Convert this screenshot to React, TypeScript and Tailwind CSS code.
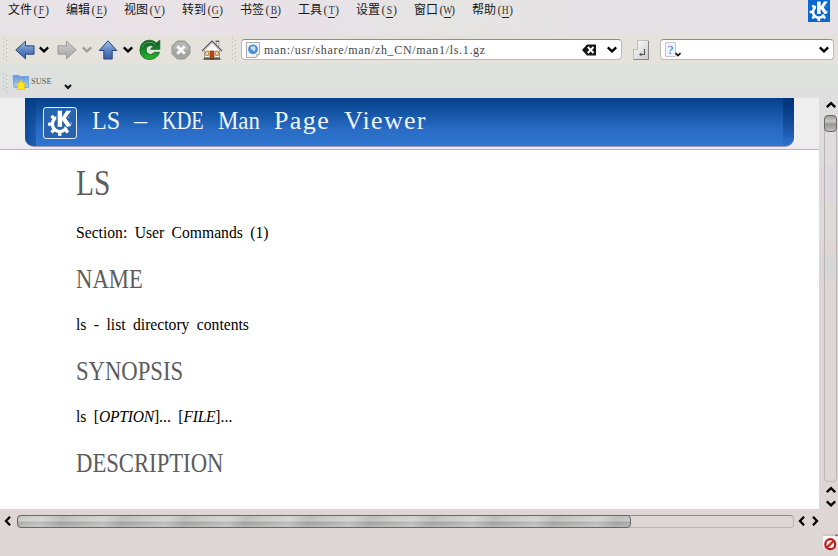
import React from "react";

const SERIF = "font-['Liberation_Serif','Noto_Sans_CJK_SC',serif]";

const menus: [string, string][] = [
  ["文件", "F"],
  ["编辑", "E"],
  ["视图", "V"],
  ["转到", "G"],
  ["书签", "B"],
  ["工具", "T"],
  ["设置", "S"],
  ["窗口", "W"],
  ["帮助", "H"],
];

function Chevron({ dir = "down", className = "" }: { dir?: "down" | "up" | "left" | "right"; className?: string }) {
  const d = {
    down: "M0.8 2.4 L5 6.4 L9.2 2.4",
    up: "M0.8 7.2 L5 3.2 L9.2 7.2",
    left: "M7 0.8 L3 5 L7 9.2",
    right: "M3 0.8 L7 5 L3 9.2",
  }[dir];
  return (
    <svg viewBox="0 0 10 10" className={`block h-[10px] w-[10px] shrink-0 overflow-visible ${className}`}>
      <path d={d} fill="none" stroke="currentColor" strokeWidth="2.3" />
    </svg>
  );
}

function Grip({ className = "" }: { className?: string }) {
  return (
    <svg width="6" height="26" className={`block shrink-0 ${className}`}>
      {[0, 1, 2, 3, 4, 5].map((i) => (
        <rect key={"a" + i} x="0" y={1 + i * 4} width="1" height="1" fill="#b5b2ae" />
      ))}
      {[0, 1, 2, 3, 4, 5].map((i) => (
        <rect key={"b" + i} x="3" y={3 + i * 4} width="1" height="1" fill="#b5b2ae" />
      ))}
    </svg>
  );
}

function Arrow({ kind }: { kind: "back" | "forward" | "up" }) {
  const rot = { back: "rotate(0 10 10)", forward: "rotate(180 10 10)", up: "rotate(90 10 10)" }[kind];
  const grey = kind === "forward";
  const id = "arrow-" + kind;
  const flip = { back: ["0", "0", "0", "1"], forward: ["0", "1", "0", "0"], up: ["0", "0", "1", "0"] }[kind];
  return (
    <svg viewBox="0 0 20 20" className="block h-5 w-5 shrink-0">
      <defs>
        <linearGradient id={id} x1={flip[0]} y1={flip[1]} x2={flip[2]} y2={flip[3]}>
          <stop offset="0" stopColor={grey ? "#d2d2d0" : "#a5c4ea"} />
          <stop offset="0.5" stopColor={grey ? "#b9b9b7" : "#6087c2"} />
          <stop offset="1" stopColor={grey ? "#a9a9a7" : "#365f9f"} />
        </linearGradient>
      </defs>
      <path
        transform={rot}
        d="M0.8 10 L10.5 1.2 V5.8 H19 V14.2 H10.5 V18.8 Z"
        fill={`url(#${id})`}
        stroke={grey ? "#989896" : "#24477f"}
        strokeWidth="1"
        strokeLinejoin="round"
      />
    </svg>
  );
}

function Reload() {
  return (
    <svg viewBox="0 0 22 22" className="block h-[22px] w-[22px] shrink-0">
      <defs>
        <linearGradient id="rl" x1="0" y1="0" x2="0" y2="1">
          <stop offset="0" stopColor="#0e5a20" />
          <stop offset="0.5" stopColor="#16892d" />
          <stop offset="1" stopColor="#2fb72b" />
        </linearGradient>
      </defs>
      <path
        d="M17.4 4 L20.8 1.2 V10.3 H11.5 L14.2 7.4 C12 5.8 7.4 6.4 7.2 11 C7.2 15.6 12.6 17 15.3 13.3 H20.4 C18 23.2 1 23.2 1 11 C1 1 12 -1.3 17.4 4 Z"
        fill="url(#rl)"
        stroke="#0b661c"
        strokeWidth="0.8"
      />
      <path d="M3.2 8 C5.5 2.5 12.5 1.8 16.6 5.6" fill="none" stroke="#5cab67" strokeWidth="0.9" />
    </svg>
  );
}

function Stop() {
  return (
    <svg viewBox="0 0 20 20" className="block h-5 w-5 shrink-0">
      <path d="M6.3 1 H13.7 L19 6.3 V13.7 L13.7 19 H6.3 L1 13.7 V6.3 Z" fill="#a4a4a3" stroke="#979796" />
      <path d="M6.7 2 H13.3 L18 6.7 V10 H2 V6.7 Z" fill="#b4b4b3" />
      <path d="M6.3 6.3 L13.7 13.7 M13.7 6.3 L6.3 13.7" stroke="#f8f8f8" strokeWidth="3" />
    </svg>
  );
}

function Home() {
  return (
    <svg viewBox="0 0 22 22" className="block h-[22px] w-[22px] shrink-0">
      <rect x="15.2" y="2.5" width="2.6" height="6" fill="#f2f2f0" stroke="#777" strokeWidth="0.6" />
      <path d="M14.6 2.2 H18.4" stroke="#444" strokeWidth="1" />
      <path d="M3.5 11 L11 3.5 L18.5 11 V19.5 H3.5 Z" fill="#fafaf8" stroke="#777" strokeWidth="0.7" />
      <path d="M1.2 12 L11 2.2 L20.8 12" fill="none" stroke="#4b4b4b" strokeWidth="1.5" />
      <path d="M2.4 11.8 L11 3.2 L19.6 11.8" fill="none" stroke="#e4e4e2" strokeWidth="0.9" />
      <rect x="9" y="12" width="4" height="8" fill="#bd4a12" stroke="#7b2e0a" strokeWidth="0.7" />
      <path d="M4.8 12.2h2.8v4.3H4.8zM14.6 12.2h2.8v4.3h-2.8z" fill="#f7ddae" stroke="#b97c2c" strokeWidth="0.9" />
      <path d="M2.5 20 H19.5" stroke="#3d3d3d" strokeWidth="1.4" />
      <path d="M3.5 18.7h5M14 18.7h4.5" stroke="#66753c" strokeWidth="1" />
    </svg>
  );
}

/* Gear with the K laid over its upper right side, on a 24 unit grid. */
function KdeGear({ cut, className = "" }: { cut: string; className?: string }) {
  return (
    <svg viewBox="0 0 24 24" className={`block shrink-0 ${className}`}>
      <circle cx="11.8" cy="13" r="6.3" fill="none" stroke="#fff" strokeWidth="2.8" />
      {[0, 45, 90, 135, 180, 225, 270, 315].map((a) => (
        <rect key={a} x="10.4" y="3" width="2.8" height="3.4" fill="#fff" transform={`rotate(${a} 11.8 13)`} />
      ))}
      <path d="M8.8 0 H23.5 L18.8 7.6 L22.6 14.6 L18.2 16.8 L14.8 13 V16.2 H8.8 Z" fill={cut} />
      <path d="M10 1.6 H13.8 V7 L17.4 1.6 H21.6 L17 7.8 L21.6 14.2 L18.2 15.6 L13.8 9.6 V15.2 H10 Z" fill="#fff" />
    </svg>
  );
}

function Globe() {
  return (
    <svg viewBox="0 0 14 16" className="ml-[4px] block h-4 w-[14px] shrink-0">
      <path d="M0.5 0.5 H13.5 V12 L10 15.5 H0.5 Z" fill="#f5f5f5" stroke="#aaa" />
      <circle cx="7" cy="7.3" r="4.9" fill="#4d8edb" />
      <path d="M4.5 5.5 Q6 3.5 8.5 4.5 Q10.5 6.5 8.8 8.8 Q7 10 6.4 7.8 Q4.6 7.8 4.5 5.5" fill="#c6e3ff" />
      <path d="M10 15.5 L10.5 12.5 L13.5 12" fill="#ddd" stroke="#999" strokeWidth="0.7" />
    </svg>
  );
}

function MenuBar() {
  return (
    <div className="flex h-[35px] justify-between bg-[linear-gradient(100deg,#e8e3e6_0%,#e8e2e8_38%,#e5e5e3_55%,#e6e1e5_72%,#e6e1e5_100%)] pl-2">
      <div className="flex pt-[3px]">
        {menus.map(([t, k]) => (
          <div key={k} className="flex h-[16px] w-[58px] text-[12px] leading-[15px] text-[#151515]">
            <span className="w-[25px]">{t}</span>
            <span className="flex text-[12px] text-[#333]">
              <span className="w-[5px] text-center">(</span>
              <span className="flex h-[14.5px] w-[7px] justify-center border-b border-[#222]">
                <span className="scale-x-[0.8]">{k}</span>
              </span>
              <span className="w-[4px]">)</span>
            </span>
          </div>
        ))}
      </div>
      <div className="mr-2 h-[22px] w-[22px] bg-[#0868ce]">
        <KdeGear cut="#0868ce" className="h-[22px] w-[22px]" />
      </div>
    </div>
  );
}

function ToolBar() {
  return (
    <div className="flex h-[29px] items-center bg-[#e5e2dc] text-black">
      <Grip className="ml-[3px]" />
      <div className="ml-[6px]"><Arrow kind="back" /></div>
      <Chevron className="ml-[4px]" />
      <div className="ml-[8px] flex w-5"><Arrow kind="forward" /></div>
      <Chevron className="ml-[5px] text-[#9f9d9a]" />
      <div className="ml-[6px]"><Arrow kind="up" /></div>
      <Chevron className="ml-[5px]" />
      <div className="ml-[6px]"><Reload /></div>
      <div className="ml-[10px]"><Stop /></div>
      <div className="ml-[10px]"><Home /></div>
      <Grip className="ml-[9px]" />
      <div className="ml-[3px] flex h-[21px] w-[381px] shrink-0 items-center rounded-[4px] border border-[#bdbab6] border-t-[#8f8c89] bg-white">
        <Globe />
        <span className="ml-[4px] w-[225px] text-[12px] leading-[16px] tracking-[0.68px] whitespace-nowrap text-[#444]">
          man:/usr/share/man/zh_CN/man1/ls.1.gz
        </span>
        <svg viewBox="0 0 14 12" className="ml-[93px] block h-3 w-[14px] shrink-0">
          <path d="M0 6 L5 0.5 H14 V11.5 H5 Z" fill="#161616" />
          <path d="M5.8 3 L11.5 9 M11.5 3 L5.8 9" stroke="#fff" strokeWidth="1.9" />
        </svg>
        <Chevron className="ml-[11px]" />
      </div>
      <svg viewBox="0 0 18 22" className="ml-[10px] block h-[22px] w-[18px] shrink-0">
        <defs>
          <linearGradient id="key" x1="0" y1="0" x2="1" y2="1">
            <stop offset="0" stopColor="#fff" />
            <stop offset="1" stopColor="#c9c9c9" />
          </linearGradient>
        </defs>
        <path d="M5.5 1.5 H16.5 V20.5 H1.5 V10.5 H5.5 Z" fill="url(#key)" stroke="#bdbdbc" />
        <path d="M1.5 20.5 H16.5 V2" fill="none" stroke="#858585" />
        <path d="M12.5 10 V15.5 H8.5" fill="none" stroke="#555" strokeWidth="1.1" />
        <path d="M9.5 13.6 L7 15.5 L9.5 17.4 Z" fill="#555" />
      </svg>
      <div className="ml-[10px] flex h-[21px] w-[174px] shrink-0 items-center rounded-[4px] border border-[#bdbab6] border-t-[#8f8c89] bg-white">
        <span className="ml-[4px] flex h-[15px] w-[11px] items-center justify-center rounded-[1px] border border-[#c9c4cf] bg-[#f3f3fa] text-[13px] leading-[13px] text-[#2c70cd]">
          ?
        </span>
        <svg viewBox="0 0 6 5" className="mt-[10px] -ml-px block h-[5px] w-[6px]">
          <path d="M0.5 1 L3 3.6 L5.5 1" fill="none" stroke="#111" strokeWidth="1.7" />
        </svg>
        <Chevron className="ml-auto mr-[4px]" />
      </div>
    </div>
  );
}

function BookmarkBar() {
  return (
    <div className="flex h-[34px] bg-[linear-gradient(#dce2de_0px,#dde1dd_20px,#dedede_23px,#dedede_34px)]">
      <svg width="6" height="22" className="mt-[8px] ml-[3px] block shrink-0">
        {[0, 1, 2, 3, 4].map((i) => (
          <React.Fragment key={i}>
            <rect x="0" y={i * 4 + 1} width="1" height="1" fill="#b5b2ae" />
            <rect x="3" y={i * 4 + 3} width="1" height="1" fill="#b5b2ae" />
          </React.Fragment>
        ))}
      </svg>
      <svg viewBox="0 0 18 17" className="mt-[10px] ml-[3px] block h-[17px] w-[18px] shrink-0">
        <defs>
          <linearGradient id="fold" x1="0" y1="0" x2="0" y2="1">
            <stop offset="0" stopColor="#6298dc" />
            <stop offset="1" stopColor="#a9cdf4" />
          </linearGradient>
        </defs>
        <path d="M1 1.5 H7 L8 2.5 H16.6 V13.4 H2 Z" fill="url(#fold)" stroke="#6d9bd3" strokeWidth="0.8" />
        <path
          d="M9 5.6 L10.5 8.8 L13.8 9.3 L12.2 11.7 L12.7 15.4 H5.3 L5.8 11.7 L4.2 9.3 L7.5 8.8 Z"
          fill="#ffe326"
          stroke="#dcb910"
          strokeWidth="0.7"
        />
      </svg>
      <span className="mt-[12px] ml-[1px] w-[21px] text-[8.5px] leading-[11px] whitespace-nowrap text-[#555]">SUSE</span>
      <svg viewBox="0 0 8 6" className="mt-[20px] ml-[12px] block h-[6px] w-2">
        <path d="M1 1 L4 4 L7 1" fill="none" stroke="#111" strokeWidth="2" />
      </svg>
    </div>
  );
}

function TitleBanner() {
  return (
    <div className="flex h-[52px] shrink-0 border-b border-[#b9b7ba] bg-[linear-gradient(#eeeeee_44px,#ece8f0_51px)] pr-[25px] pl-[25px]">
      <div className="flex h-[49px] w-full overflow-hidden rounded-b-[9px] border-b border-[#9d9ab5] bg-[linear-gradient(#064089_0px,#0b4a97_7px,#1b5cae_20px,#2a6cc6_32px,#2e75cf_48px)]">
        <div className="h-full w-[11px] shrink-0 bg-[linear-gradient(90deg,#003c89aa,#063c7d66)]" />
        <div className="mt-[9px] ml-[7px] flex h-[32px] w-[34px] shrink-0 items-center justify-center rounded-[3px] border border-[#e4edf8] bg-[#2864ae]">
          <KdeGear cut="#2864ae" className="h-[28px] w-[28px]" />
        </div>
        <h1 className="mt-[8px] ml-[15px] flex text-[26px] leading-[30px] font-normal whitespace-pre text-[#edf5ff]">
          <span className="w-[42px] origin-left scale-x-[0.93]">LS </span>
          <span className="w-[28px]">– </span>
          <span className="w-[56px] origin-left scale-x-[0.78]">KDE </span>
          <span className="w-[56px] origin-left scale-x-[0.88]">Man </span>
          <span className="w-[70px] tracking-[1.4px]">Page </span>
          <span className="w-[86px] tracking-[1.3px]">Viewer</span>
        </h1>
        <div className="ml-auto h-full w-[11px] shrink-0 bg-[linear-gradient(#002a72aa,#00307755_70%,#2d74df44)]" />
      </div>
    </div>
  );
}

function Section({ children }: { children: React.ReactNode }) {
  return (
    <h2 className="h-[46px] w-[300px] origin-left scale-x-[0.84] text-[27px] leading-[46px] font-normal whitespace-nowrap text-[#5c5c5c]">
      {children}
    </h2>
  );
}

function Line({ children }: { children: React.ReactNode }) {
  return (
    <p className="h-[46px] w-[300px] origin-left scale-x-[0.92] text-[17px] leading-[46px] [word-spacing:3.8px] whitespace-nowrap text-black">
      {children}
    </p>
  );
}

function Page() {
  return (
    <div className="flex h-[411px] w-[819px] flex-col bg-white">
      <TitleBanner />
      <div className="pt-[7px] pl-[76px]">
        <h2 className="h-[53px] w-[200px] origin-left scale-x-[0.84] text-[35px] leading-[54px] font-normal text-[#5c5c5c]">LS</h2>
        <Line>Section: User Commands (1)</Line>
        <Section>NAME</Section>
        <Line>ls - list directory contents</Line>
        <Section>SYNOPSIS</Section>
        <Line>
          ls [<i className="tracking-[-0.3px]">OPTION</i>]... [<i className="tracking-[-0.3px]">FILE</i>]...
        </Line>
        <Section>DESCRIPTION</Section>
      </div>
    </div>
  );
}

function VerticalScroll() {
  return (
    <div className="flex w-[19px] flex-col items-center bg-[linear-gradient(#dedede_0px,#dedcdd_65px,#ddd8df_70px,#ddd8dd_103px,#dcdbd6_107px,#dcdbd5_141px,#dfd5d5_145px,#dfd5d5_157px,#d7d7d7_161px,#d7d7d7_178px,#ded6d5_184px,#ded6d5_411px)] pl-[4px]">
      <Chevron dir="up" className="mt-[2px]" />
      <div className="mt-[5px] flex h-[370px] w-[13px] flex-col rounded-[4px] border border-[#bbb5b6]">
        <div className="-mx-px -mt-px h-[17px] rounded-[4px] border border-[#686866] bg-[linear-gradient(#a09e9c,#c7c7c5_35%,#979694_55%,#c0bfbd)]" />
      </div>
      <Chevron dir="up" className="mt-[3px]" />
      <Chevron dir="down" className="mt-[4px]" />
    </div>
  );
}

function HorizontalScroll() {
  return (
    <div className="flex h-[24px] items-center bg-[#ded6d5]">
      <Chevron dir="left" className="ml-[3px]" />
      <div className="ml-[4px] h-[13px] w-[777px] rounded-[4px] border border-[#bbb5b4] border-t-[#918b8b]">
        <div className="-mt-px -ml-px h-[13px] w-[614px] rounded-[4px] border border-[#686866] bg-[linear-gradient(#c7c7c6_0px,#cecece_5px,#a9aaa8_6px,#bbbbb9_11px)]">
          <div className="h-full rounded-[3px] bg-[repeating-linear-gradient(110deg,#ffffff00_0px,#ffffff33_24px,#77777722_42px,#ffffff00_58px)]" />
        </div>
      </div>
      <Chevron dir="left" className="ml-[3px]" />
      <Chevron dir="right" className="ml-[3px]" />
    </div>
  );
}

function StatusBar() {
  return (
    <div className="flex h-[23px] justify-end bg-[#ded6d5]">
      <svg viewBox="0 0 15 19" className="mt-px block h-[19px] w-[15px]">
        <rect y="2" width="15" height="11" fill="#f7f6f6" />
        <rect width="15" height="2" fill="#cfcaca" />
        <rect x="12.5" y="0.7" width="2" height="1.5" fill="#c23" />
        <circle cx="7.3" cy="10.2" r="5" fill="#f1e9e7" stroke="#b51c14" strokeWidth="2.2" />
        <path d="M3.8 13.6 L10.8 6.7" stroke="#c7271c" strokeWidth="2.2" />
      </svg>
    </div>
  );
}

export default function App() {
  return (
    <div className={`flex h-[556px] w-[838px] flex-col overflow-hidden bg-[#ded6d5] ${SERIF}`}>
      <MenuBar />
      <ToolBar />
      <BookmarkBar />
      <div className="flex h-[411px] shrink-0">
        <Page />
        <VerticalScroll />
      </div>
      <HorizontalScroll />
      <StatusBar />
    </div>
  );
}
